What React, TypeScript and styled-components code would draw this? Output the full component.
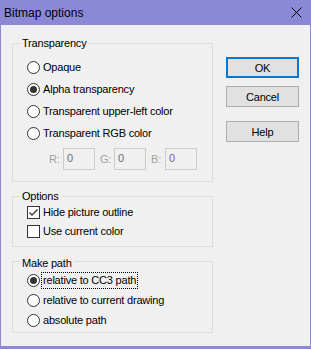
import React from 'react';
import styled, { createGlobalStyle } from 'styled-components';

const GlobalStyle = createGlobalStyle`
  html, body {
    margin: 0;
    padding: 0;
    background: #ffffff;
  }
  * {
    box-sizing: border-box;
  }
`;

const accent = '#8b89d6';

const Window = styled.div`
  width: 311px;
  height: 349px;
  display: flex;
  flex-direction: column;
  border: 1px solid ${accent};
  border-top: none;
  border-bottom-width: 3px;
  background: ${accent};
  font-family: 'Liberation Sans', Arial, sans-serif;
  font-size: 11px;
  letter-spacing: -0.2px;
  color: #000;
`;

const TitleBar = styled.div`
  height: 25px;
  flex: none;
  display: flex;
  align-items: center;
  justify-content: space-between;
  padding: 0 8px 0 3px;
  font-size: 12px;
  letter-spacing: 0;
`;

const CloseButton = styled.div`
  width: 12px;
  height: 12px;
  display: flex;
  align-items: center;
  justify-content: center;
`;

const Client = styled.div`
  flex: 1;
  display: flex;
  gap: 13px;
  padding: 18px 11px 0 11px;
  background: #f0f0f0;
`;

const LeftColumn = styled.div`
  width: 201px;
  display: flex;
  flex-direction: column;
  gap: 14px;
`;

const GroupBox = styled.div<{ $pad: string }>`
  display: flex;
  flex-direction: column;
  border: 1px solid #dcdcdc;
  padding: ${(p) => p.$pad};
`;

const Legend = styled.div`
  align-self: flex-start;
  margin: -7px 0 0 7px;
  padding: 0 2px;
  height: 13px;
  line-height: 13px;
  background: #f0f0f0;
`;

const Row = styled.div<{ $h: number }>`
  height: ${(p) => p.$h}px;
  display: flex;
  align-items: center;
  gap: 3px;
  padding-left: 14px;
  white-space: nowrap;
`;

const RadioCircle = styled.span<{ $on?: boolean }>`
  width: 13px;
  height: 13px;
  flex: none;
  border: 1px solid #333333;
  border-radius: 50%;
  background: #ffffff;
  display: flex;
  align-items: center;
  justify-content: center;

  &::after {
    content: '';
    display: ${(p) => (p.$on ? 'block' : 'none')};
    width: 7px;
    height: 7px;
    border-radius: 50%;
    background: #333333;
  }
`;

const CheckSquare = styled.span`
  width: 13px;
  height: 13px;
  flex: none;
  border: 1px solid #333333;
  background: #ffffff;
  display: flex;
  align-items: center;
  justify-content: center;
`;

const Label = styled.span<{ $focus?: boolean }>`
  line-height: 13px;
  outline: ${(p) => (p.$focus ? '1px dotted #000' : 'none')};
  outline-offset: 1px;
`;

const FieldRow = styled.div`
  display: flex;
  gap: 5px;
  margin-top: 4px;
  padding-left: 36px;
`;

const Field = styled.div`
  display: flex;
  align-items: center;
`;

const FieldLabel = styled.span`
  width: 14px;
  color: #a0a0a0;
`;

const FieldBox = styled.div`
  width: 32px;
  height: 22px;
  border: 1px solid #cccccc;
  background: #f0f0f0;
  color: #6d6d6d;
  padding: 1px 0 0 3px;
  line-height: 17px;
`;

const ButtonColumn = styled.div`
  width: 73px;
  display: flex;
  flex-direction: column;
  padding-top: 14px;
`;

const Button = styled.div<{ $default?: boolean; $gap: number }>`
  height: 21px;
  margin-top: ${(p) => p.$gap}px;
  display: flex;
  align-items: center;
  justify-content: center;
  background: #e1e1e1;
  border: ${(p) => (p.$default ? '2px solid #0078d7' : '1px solid #adadad')};
`;

const Radio = ({ label, on, focus, h }: { label: string; on?: boolean; focus?: boolean; h: number }) => (
  <Row $h={h}>
    <RadioCircle $on={on} />
    <Label $focus={focus}>{label}</Label>
  </Row>
);

const Check = ({ label, on, h }: { label: string; on?: boolean; h: number }) => (
  <Row $h={h}>
    <CheckSquare>
      {on && (
        <svg width="11" height="11" viewBox="0 0 11 11">
          <path d="M1.5 5.5 L4 8 L9.5 2.5" fill="none" stroke="#333" strokeWidth="1.3" />
        </svg>
      )}
    </CheckSquare>
    <Label>{label}</Label>
  </Row>
);

const App = () => {
  return (
    <>
      <GlobalStyle />
      <Window>
        <TitleBar>
          <span>Bitmap options</span>
          <CloseButton>
            <svg width="11" height="11" viewBox="0 0 11 11">
              <path d="M0.5 0.5 L10.5 10.5 M10.5 0.5 L0.5 10.5" stroke="#000" strokeWidth="1" />
            </svg>
          </CloseButton>
        </TitleBar>
        <Client>
          <LeftColumn>
            <GroupBox $pad="0 0 11px 0">
              <Legend>Transparency</Legend>
              <div style={{ height: 6 }} />
              <Radio h={22} label="Opaque" />
              <Radio h={22} label="Alpha transparency" on />
              <Radio h={22} label="Transparent upper-left color" />
              <Radio h={22} label="Transparent RGB color" />
              <FieldRow>
                {['R:', 'G:', 'B:'].map((c) => (
                  <Field key={c}>
                    <FieldLabel>{c}</FieldLabel>
                    <FieldBox>0</FieldBox>
                  </Field>
                ))}
              </FieldRow>
            </GroupBox>
            <GroupBox $pad="0 0 5px 0">
              <Legend>Options</Legend>
              <Check h={19} label="Hide picture outline" on />
              <Check h={19} label="Use current color" />
            </GroupBox>
            <GroupBox $pad="2px 0 2px 0">
              <Legend>Make path</Legend>
              <Radio h={20} label="relative to CC3 path" on focus />
              <Radio h={20} label="relative to current drawing" />
              <Radio h={20} label="absolute path" />
            </GroupBox>
          </LeftColumn>
          <ButtonColumn>
            <Button $default $gap={0}>OK</Button>
            <Button $gap={8}>Cancel</Button>
            <Button $gap={14}>Help</Button>
          </ButtonColumn>
        </Client>
      </Window>
    </>
  );
};

export default App;
